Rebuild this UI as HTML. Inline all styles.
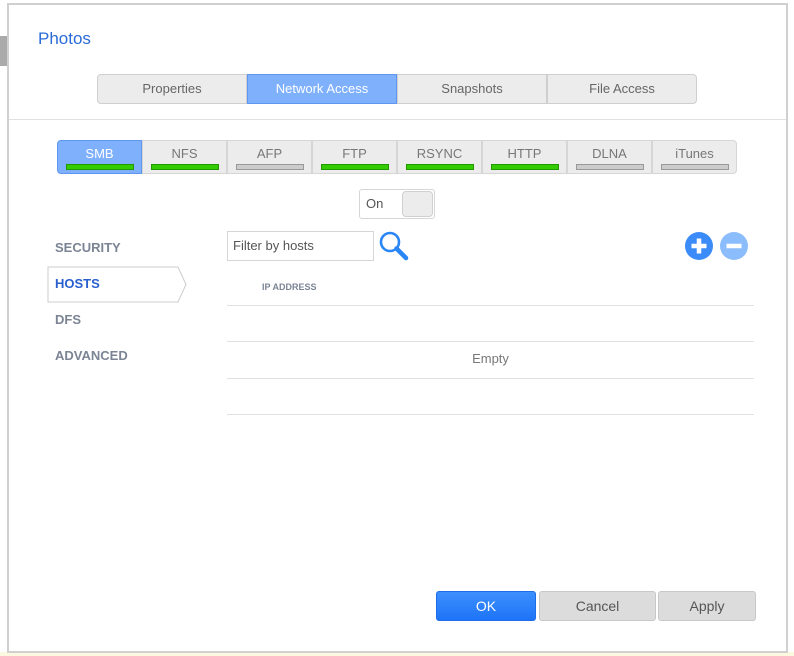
<!DOCTYPE html>
<html><head><style>
*{box-sizing:border-box;margin:0;padding:0}
body{width:794px;height:656px;background:#fff;position:relative;overflow:hidden;font-family:"Liberation Sans","DejaVu Sans",sans-serif;}
.a{position:absolute}
.dlg{left:7px;top:3px;width:781px;height:650px;border:2px solid #d0d0d0;border-top-width:2px;background:#fff}
.tab{position:absolute;top:74px;height:30px;width:150px;background:#ececec;border:1px solid #cfcfcf;color:#666;font-size:13px;text-align:center;line-height:28px}
.svc{position:absolute;top:140px;height:34px;width:85px;background:#ececec;border:1px solid #d6d6d6;color:#777;font-size:13px;text-align:center;line-height:26px}
.svc i{position:absolute;left:8px;top:23px;width:68px;height:6px;background:#33cc00;border:1px solid #229900}
.svc i.g{background:#ccc;border-color:#999}
.nav{position:absolute;left:55px;font-size:13px;font-weight:bold;color:#7b8494}
.ln{position:absolute;left:227px;width:527px;height:1px;background:#e0e0e0}
.btn{position:absolute;top:591px;height:30px;border-radius:3px;font-size:14px;text-align:center;line-height:28px}
</style></head><body>
<div class="a" style="left:0;top:36px;width:7px;height:30px;background:#aaa"></div>
<div class="a" style="left:0;top:652px;width:794px;height:4px;background:#fbf9e0"></div>
<div class="a dlg"></div>
<div class="a" style="left:38px;top:29px;font-size:17px;color:#2a6bd8">Photos</div>
<div class="tab" style="left:97px;border-radius:4px 0 0 4px">Properties</div>
<div class="tab" style="left:247px;background:#7eb0fb;border-color:#5e96f0;color:#fff">Network Access</div>
<div class="tab" style="left:397px">Snapshots</div>
<div class="tab" style="left:547px;border-radius:0 4px 4px 0">File Access</div>
<div class="a" style="left:9px;top:119px;width:777px;height:1px;background:#e0e0e0"></div>

<div class="svc" style="left:57px;background:#7eb0fb;border-color:#5e96f0;color:#fff;border-radius:4px 0 0 4px">SMB<i></i></div>
<div class="svc" style="left:142px">NFS<i></i></div>
<div class="svc" style="left:227px">AFP<i class="g"></i></div>
<div class="svc" style="left:312px">FTP<i></i></div>
<div class="svc" style="left:397px">RSYNC<i></i></div>
<div class="svc" style="left:482px">HTTP<i></i></div>
<div class="svc" style="left:567px">DLNA<i class="g"></i></div>
<div class="svc" style="left:652px;border-radius:0 4px 4px 0">iTunes<i class="g"></i></div>

<div class="a" style="left:359px;top:189px;width:76px;height:30px;border:1px solid #d6d6d6;border-radius:3px;font-size:13px;color:#555;padding:6px 0 0 6px">On</div>
<div class="a" style="left:402px;top:191px;width:31px;height:26px;background:#ececec;border:1px solid #d0d0d0;border-radius:4px"></div>

<div class="nav" style="top:240px">SECURITY</div>
<svg class="a" style="left:47px;top:266px" width="142" height="38"><path d="M1 1H131L139 18.5L131 36H1Z" fill="#fff" stroke="#ccc"/></svg>
<div class="nav" style="top:276px;color:#2a5fd0">HOSTS</div>
<div class="nav" style="top:312px">DFS</div>
<div class="nav" style="top:348px">ADVANCED</div>

<div class="a" style="left:227px;top:231px;width:147px;height:30px;border:1px solid #d6d6d6;font-size:13px;color:#555;padding:6px 0 0 5px">Filter by hosts</div>
<svg class="a" style="left:378px;top:230px" width="32" height="32"><circle cx="12" cy="12" r="9" fill="none" stroke="#2a85f5" stroke-width="2.6"/><path d="M18.5 18.5L28 28" stroke="#2a85f5" stroke-width="4.5" stroke-linecap="round"/></svg>
<svg class="a" style="left:684px;top:231px" width="66" height="30"><circle cx="15" cy="15" r="14" fill="#3b8cf8"/><path d="M15 7.5V22.5M7.5 15H22.5" stroke="#fff" stroke-width="4.5"/><circle cx="50" cy="15" r="14" fill="#8bbcfc"/><path d="M42.5 15H57.5" stroke="#fff" stroke-width="4.5"/></svg>

<div class="a" style="left:262px;top:282px;font-size:9px;font-weight:bold;color:#7b8494">IP ADDRESS</div>
<div class="ln" style="top:305px"></div>
<div class="ln" style="top:341px"></div>
<div class="a" style="left:227px;width:527px;top:351px;text-align:center;font-size:13px;color:#777">Empty</div>
<div class="ln" style="top:378px"></div>
<div class="ln" style="top:414px"></div>

<div class="btn" style="left:436px;width:100px;background:linear-gradient(#3d8ffd,#1e74f8);border:1px solid #1d6ee8;color:#fff">OK</div>
<div class="btn" style="left:539px;width:117px;background:#dcdcdc;border:1px solid #c8c8c8;color:#555">Cancel</div>
<div class="btn" style="left:658px;width:98px;background:#dcdcdc;border:1px solid #c8c8c8;color:#555">Apply</div>
</body></html>
